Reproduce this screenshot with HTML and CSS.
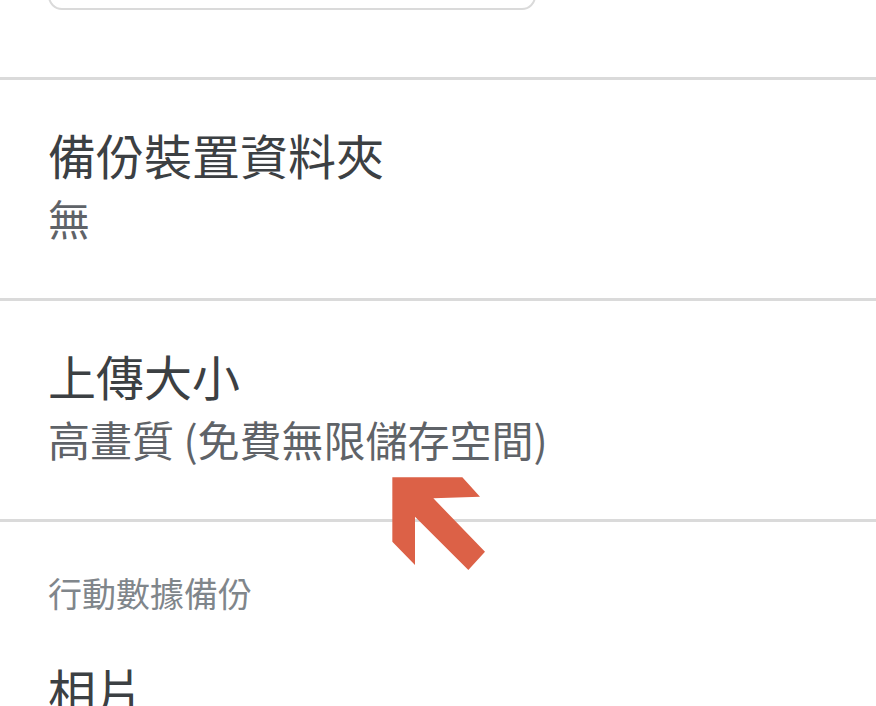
FILE: index.html
```html
<!DOCTYPE html>
<html lang="zh-Hant">
<head>
<meta charset="utf-8">
<link rel="stylesheet" href="styles.css">
</head>
<body>
<div class="page">
  <div class="top">
    <div class="box"></div>
  </div>
  <div class="divider"></div>
  <div class="row">
    <div class="title">備份裝置資料夾</div>
    <div class="sub">無</div>
  </div>
  <div class="divider"></div>
  <div class="row">
    <div class="title">上傳大小</div>
    <div class="sub">高畫質 (免費無限儲存空間)</div>
  </div>
  <div class="divider"></div>
  <div class="section">
    <div class="header">行動數據備份</div>
    <div class="title item">相片</div>
  </div>
  <svg class="arrow" viewBox="0 0 330 330" width="110" height="110">
    <polygon points="22,22 232,22 285,80 145,85 300,245 250,300 90,140 90,285 22,215" fill="#dc6147"/>
  </svg>
</div>
</body>
</html>
```
FILE: styles.css
```css
html, body {
  margin: 0;
  padding: 0;
  background: #ffffff;
}
.page {
  position: relative;
  width: 876px;
  height: 706px;
  overflow: hidden;
  font-family: "Noto Sans CJK TC", "Noto Sans", sans-serif;
}
.top {
  display: flow-root;
  height: 77px;
  padding-left: 48px;
}
.box {
  width: 484px;
  height: 50px;
  margin-top: -44px;
  border: 2px solid #dadada;
  border-radius: 14px;
}
.divider {
  height: 3px;
  background: #dadada;
}
.row {
  height: 218px;
  padding-left: 48px;
  display: flex;
  flex-direction: column;
  justify-content: center;
}
.title {
  font-size: 48px;
  line-height: 58px;
  color: #3c4043;
}
.sub {
  font-size: 42px;
  line-height: 70px;
  color: #5f6368;
}
.section {
  padding-left: 48px;
  padding-top: 46px;
}
.header {
  font-size: 34px;
  line-height: 50px;
  color: #80868b;
}
.item {
  margin-top: 42px;
}
.arrow {
  position: absolute;
  left: 385px;
  top: 470px;
}
```
